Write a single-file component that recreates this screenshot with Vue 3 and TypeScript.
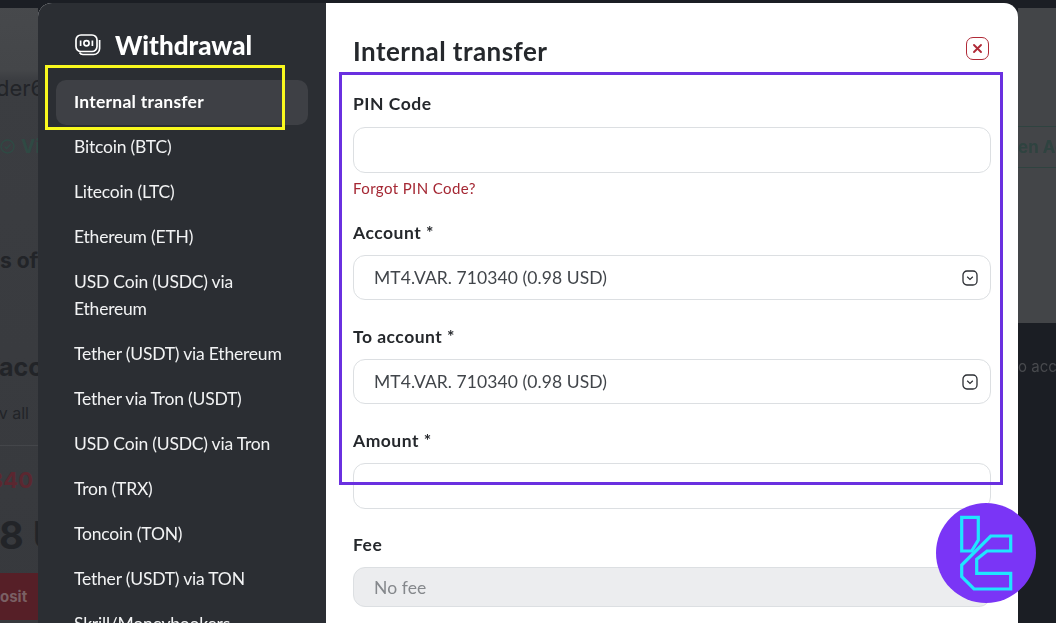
<script setup lang="ts">
import { ref } from 'vue'

const methods = [
  'Internal transfer',
  'Bitcoin (BTC)',
  'Litecoin (LTC)',
  'Ethereum (ETH)',
  'USD Coin (USDC) via Ethereum',
  'Tether (USDT) via Ethereum',
  'Tether via Tron (USDT)',
  'USD Coin (USDC) via Tron',
  'Tron (TRX)',
  'Toncoin (TON)',
  'Tether (USDT) via TON',
  'Skrill/Moneybookers',
]

const active = ref(methods[0])
const accountName = 'MT4.VAR. 710340 (0.98 USD)'
</script>

<template>
  <div class="screen">
    <div class="backdrop">
      <div class="side left">
        <div class="b-row der">der6</div>
        <div class="b-row verified">
          <svg class="check" width="15" height="15" viewBox="0 0 15 15">
            <circle cx="7.5" cy="7.5" r="6.5" fill="none" stroke="#2f4a44" stroke-width="1.4" />
            <path d="M4.5 7.5l2 2 4-4" fill="none" stroke="#2f4a44" stroke-width="1.4" />
          </svg>
          <span>Vi</span>
        </div>
        <div class="b-row off">s off</div>
        <div class="b-row acc">acc</div>
        <div class="b-row all">v all</div>
        <div class="b-line"></div>
        <div class="b-row num">340</div>
        <div class="b-row big">8 U</div>
        <div class="b-btn">osit</div>
      </div>
      <div class="center"></div>
      <div class="side right">
        <div class="r-top">
          <div class="r-btn">en Acc</div>
        </div>
        <div class="r-bottom">o acco</div>
      </div>
    </div>

    <div class="modal">
      <aside class="sidebar">
        <div class="brand">
          <svg class="brand-icon" width="26" height="22" viewBox="0 0 26 22" fill="none" stroke="#fff" stroke-width="1.7">
            <rect x="1" y="1" width="21" height="16.5" rx="5" />
            <path d="M24.6 6v8.5a6 6 0 0 1-6 6H8a4 4 0 0 1-3.5-2" />
            <circle cx="11.5" cy="9.2" r="2.6" />
            <path d="M5.6 6.5v5.4M17.4 6.5v5.4" />
          </svg>
          <h2>Withdrawal</h2>
        </div>
        <nav class="menu">
          <a v-for="m in methods" :key="m" class="item" :class="{ on: m === active }">{{ m }}</a>
        </nav>
      </aside>

      <main class="content">
        <header class="head">
          <h1>Internal transfer</h1>
          <button class="close" type="button" aria-label="Close">
            <svg width="11" height="11" viewBox="0 0 11 11">
              <path d="M2 2l7 7M9 2l-7 7" stroke="#b02a37" stroke-width="1.9" stroke-linecap="round" />
            </svg>
          </button>
        </header>

        <div class="field tight">
          <label>PIN Code</label>
          <input class="ctl" type="text" />
          <a class="forgot">Forgot PIN Code?</a>
        </div>

        <div class="field">
          <label>Account *</label>
          <div class="select-wrap">
            <select class="ctl sel"><option>{{ accountName }}</option></select>
            <svg class="chev" width="16" height="16" viewBox="0 0 16 16" fill="none">
              <rect x="1" y="1" width="14" height="14" rx="4" stroke="#2b2e33" stroke-width="1.3" />
              <path d="M5.2 6.8L8 9.4l2.8-2.6" stroke="#2b2e33" stroke-width="1.2" />
            </svg>
          </div>
        </div>

        <div class="field">
          <label>To account *</label>
          <div class="select-wrap">
            <select class="ctl sel"><option>{{ accountName }}</option></select>
            <svg class="chev" width="16" height="16" viewBox="0 0 16 16" fill="none">
              <rect x="1" y="1" width="14" height="14" rx="4" stroke="#2b2e33" stroke-width="1.3" />
              <path d="M5.2 6.8L8 9.4l2.8-2.6" stroke="#2b2e33" stroke-width="1.2" />
            </svg>
          </div>
        </div>

        <div class="field amount">
          <label>Amount *</label>
          <input class="ctl" type="text" />
        </div>

        <div class="field">
          <label>Fee</label>
          <input class="ctl fee" type="text" value="No fee" disabled />
        </div>
      </main>
    </div>

    <div class="mark-yellow"></div>
    <div class="mark-purple"></div>

    <svg class="logo" width="100" height="100" viewBox="0 0 100 100">
      <circle cx="50" cy="50" r="50" fill="#7a35f6" />
      <g fill="none" stroke="#1fe6ff" stroke-width="3.2">
        <polygon points="25.7,14.3 42.3,14.3 42.3,37 35.7,48 25.7,48" />
        <polygon points="74.7,33 54.7,33 25.7,62 25.7,73.7 38,86 74.7,86 74.7,70.3 40.7,70.3 40.7,56.3 51,48 74.7,48" />
      </g>
    </svg>
  </div>
</template>

<style scoped>
.screen {
  position: relative;
  width: 1056px;
  height: 623px;
  overflow: hidden;
  background: #1b1e24;
  font-family: 'Lato', 'Open Sans', sans-serif;
}

.backdrop {
  display: grid;
  grid-template-columns: 38px 1fr 38px;
  height: 623px;
  font-family: 'Inter', sans-serif;
  filter: blur(0.6px);
}

.side { overflow: hidden; }

.left {
  display: flex;
  flex-direction: column;
  padding-top: 8px;
  background: linear-gradient(#47494c 0, #444649 70px, #3b3d41 80px, #37393d 623px);
  box-shadow: inset 0 8px 0 #1b1e24;
}

.b-row {
  display: flex;
  justify-content: flex-end;
  align-items: center;
  white-space: nowrap;
  color: #222428;
}

.der { margin-top: 64px; height: 32px; font-size: 22px; justify-content: flex-start; margin-left: -4px; }
.verified { margin-top: 29px; height: 26px; justify-content: flex-start; color: #2f4a44; font-weight: 700; font-size: 19px; gap: 6px; }
.check { flex-shrink: 0; }
.off { margin-top: 84px; height: 34px; font-size: 21px; font-weight: 700; justify-content: flex-start; }
.acc { margin-top: 73px; height: 34px; font-size: 25px; font-weight: 700; justify-content: flex-start; margin-left: -1px; }
.all { margin-top: 18px; height: 22px; font-size: 16px; justify-content: flex-end; padding-right: 9px; }
.b-line { margin-top: 21px; height: 1px; background: #44464a; flex-shrink: 0; }
.num { margin-top: 19px; height: 30px; font-size: 22px; font-weight: 700; color: #5b2730; padding-right: 5px; }
.big { margin-top: 16px; height: 48px; font-size: 38px; font-weight: 700; justify-content: flex-start; margin-left: -1px; }
.b-btn {
  margin-top: 14px;
  height: 47px;
  line-height: 47px;
  background: #561f27;
  color: #7a6064;
  font-weight: 700;
  font-size: 15px;
  text-align: right;
  padding-right: 13px;
  white-space: nowrap;
}

.right { display: flex; flex-direction: column; }

.r-top {
  height: 315px;
  margin-top: 8px;
  box-sizing: border-box;
  background: #434548;
  padding-top: 118px;
}

.r-btn {
  height: 42px;
  line-height: 40px;
  box-sizing: border-box;
  border-top: 1px solid #2f4340;
  border-bottom: 1px solid #2f4340;
  color: #2f4340;
  font-weight: 700;
  font-size: 17px;
  white-space: nowrap;
  overflow: hidden;
}

.r-bottom {
  margin-top: 34px;
  color: #484a4e;
  font-size: 15px;
  white-space: nowrap;
}

.modal {
  position: absolute;
  left: 38px;
  top: 3px;
  width: 980px;
  height: 660px;
  display: flex;
  border-radius: 14px 14px 0 0;
  overflow: hidden;
  background: #fff;
}

.sidebar {
  width: 288px;
  flex-shrink: 0;
  box-sizing: border-box;
  padding: 0 18px;
  background: #2b2e33;
  color: #fff;
}

.brand {
  display: flex;
  align-items: center;
  gap: 14px;
  height: 77px;
  padding: 7px 0 0 19px;
  box-sizing: border-box;
}

.brand-icon { flex-shrink: 0; }

.brand h2 {
  margin: 0;
  font-size: 26px;
  font-weight: 900;
  line-height: 1;
}

.menu { display: flex; flex-direction: column; }

.item {
  display: block;
  padding: 8px 18px 10px;
  font-size: 17.5px;
  line-height: 27px;
  border-radius: 10px;
  color: #f2f3f4;
  letter-spacing: -0.2px;
}

.item.on {
  background: #3e4045;
  color: #fff;
  font-weight: 700;
  letter-spacing: 0.25px;
}

.content {
  flex: 1;
  box-sizing: border-box;
  padding: 28px 27px 0;
  color: #25282c;
}

.head {
  display: flex;
  justify-content: space-between;
  align-items: flex-start;
  margin-bottom: 19px;
}

.head h1 {
  margin: 0;
  font-size: 26px;
  line-height: 40px;
  font-weight: 700;
  letter-spacing: 0.45px;
}

.close {
  display: flex;
  align-items: center;
  justify-content: center;
  width: 23px;
  height: 23px;
  margin-top: 6px;
  margin-right: 2px;
  padding: 0;
  border: 1.5px solid #b02a37;
  border-radius: 7px;
  background: #fff;
}

.field { margin-bottom: 23px; }
.field.tight { margin-bottom: 20px; }
.field.amount { margin-bottom: 22px; }

.field label {
  display: block;
  margin-bottom: 9px;
  font-size: 17.5px;
  line-height: 27px;
  font-weight: 700;
  letter-spacing: 0.5px;
}

.field.tight label { margin-bottom: 10px; }

.ctl {
  display: block;
  width: 100%;
  height: 46px;
  box-sizing: border-box;
  padding: 0 20px;
  border: 1px solid #dcdfe2;
  border-radius: 12px;
  background: #fff;
  font-family: inherit;
  font-size: 17.5px;
  letter-spacing: 0.08px;
  color: #41454a;
  outline: none;
}

.sel { appearance: none; height: 45px; }

.fee {
  height: 40px;
  background: #ecedef;
  color: #85888c;
  opacity: 1;
}

.forgot {
  display: block;
  margin-top: 4px;
  font-size: 15px;
  line-height: 22px;
  letter-spacing: 0.4px;
  color: #a52834;
}

.select-wrap { position: relative; }

.chev {
  position: absolute;
  right: 13px;
  top: 15px;
  pointer-events: none;
}

.mark-yellow {
  position: absolute;
  left: 45px;
  top: 65px;
  width: 240px;
  height: 65px;
  box-sizing: border-box;
  border: 3px solid #f9f91e;
}

.mark-purple {
  position: absolute;
  left: 339px;
  top: 72px;
  width: 664px;
  height: 413px;
  box-sizing: border-box;
  border: 3px solid #6a30e0;
}

.logo {
  position: absolute;
  left: 936px;
  top: 503px;
}
</style>
